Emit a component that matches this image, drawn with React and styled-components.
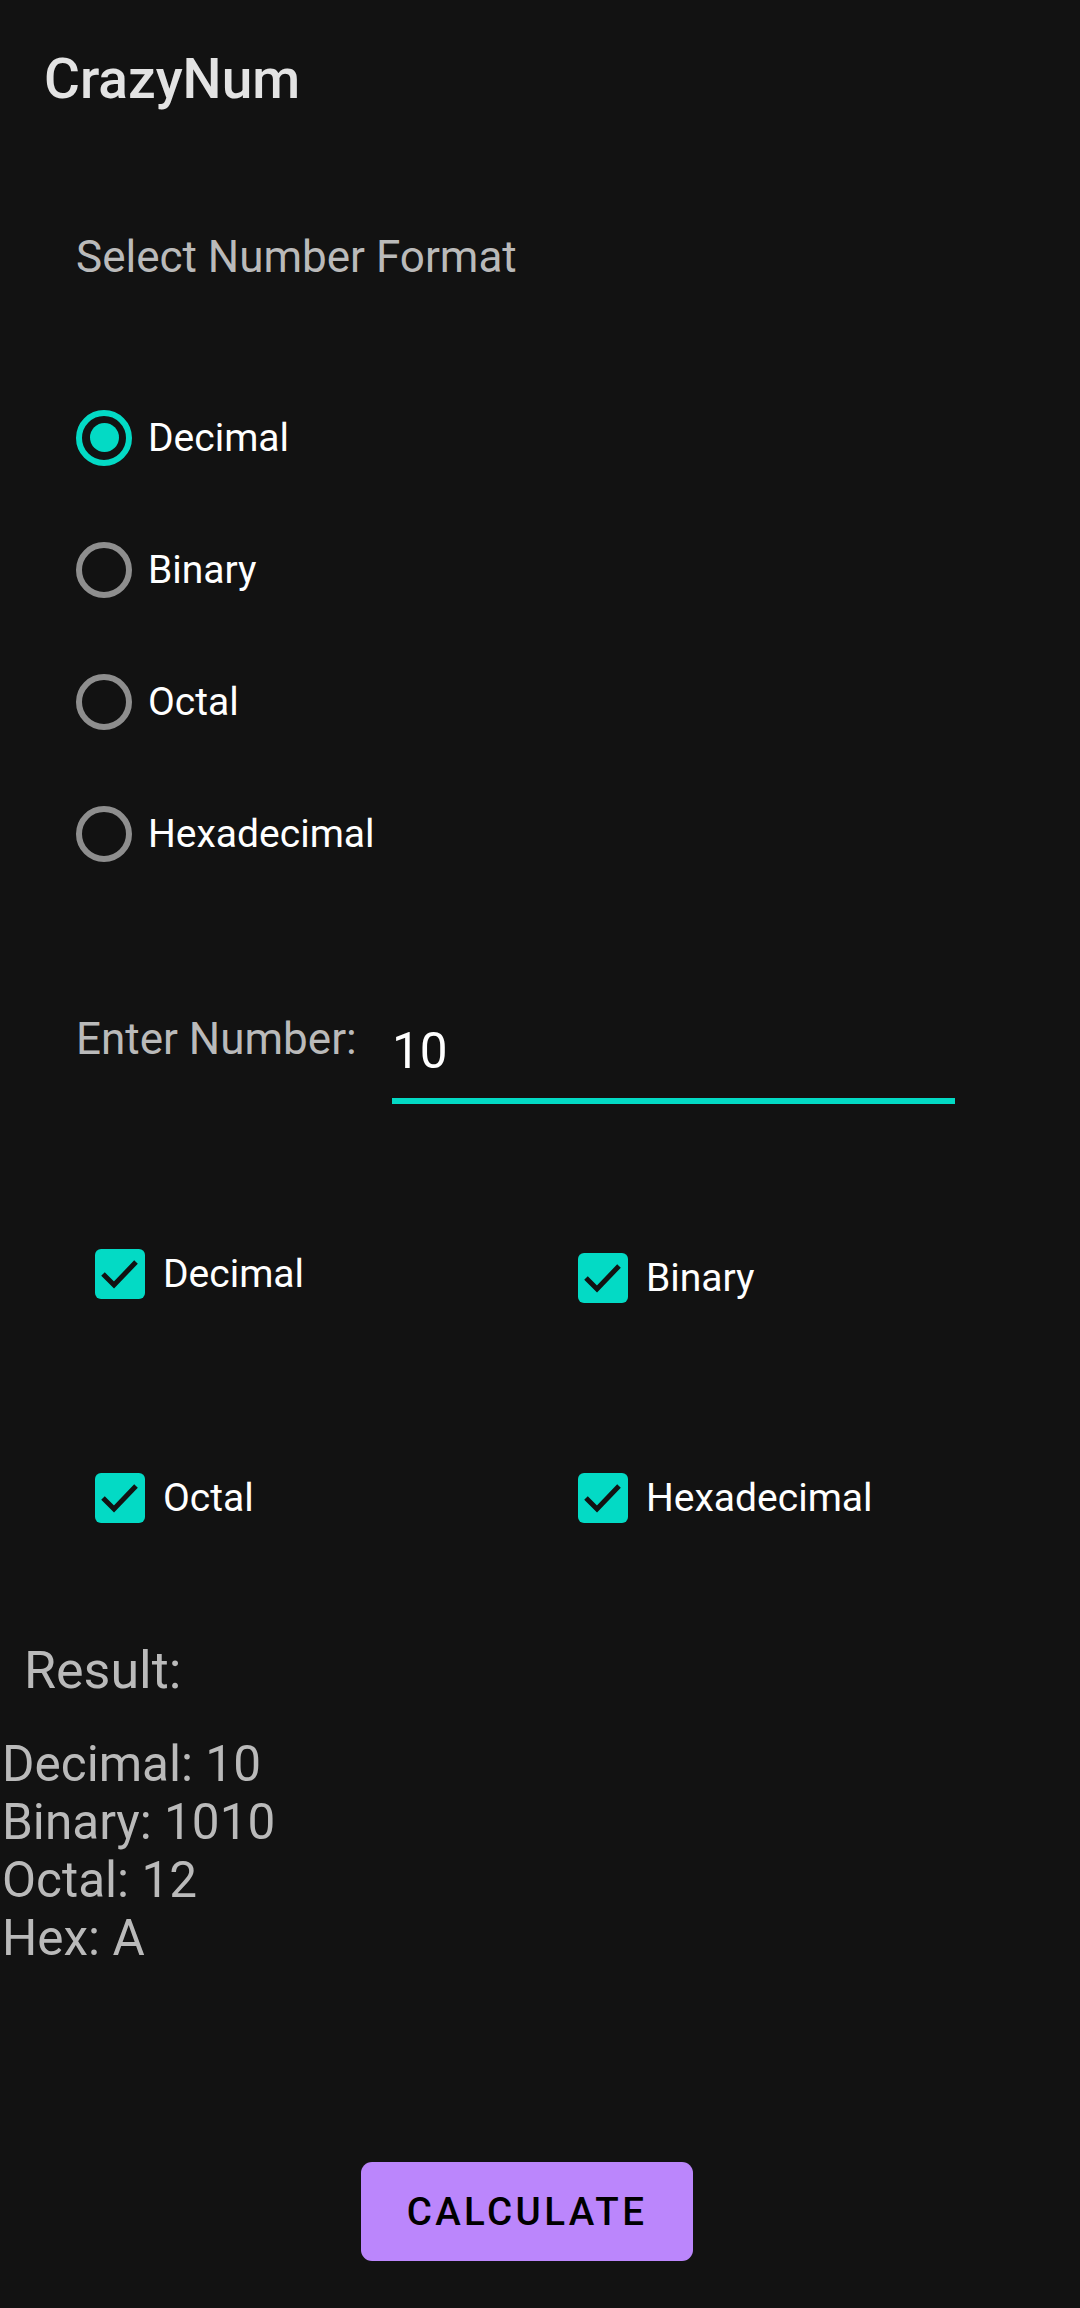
import React, { useState } from "react";
import styled, { createGlobalStyle } from "styled-components";

const GlobalStyle = createGlobalStyle`
  html, body {
    margin: 0;
    padding: 0;
    background: #121212;
  }
  body {
    font-family: Roboto, "Noto Sans", "Liberation Sans", sans-serif;
    -webkit-font-smoothing: antialiased;
  }
  * { box-sizing: border-box; }
`;

const TEAL = "#03dac5";

const Screen = styled.div`
  width: 1080px;
  min-height: 2308px;
  background: #121212;
  display: flex;
  flex-direction: column;
`;

const AppBar = styled.header`
  padding: 47px 0 0 44px;
  height: 232px;
`;

const Title = styled.h1`
  margin: 0;
  font-size: 55px;
  line-height: 64.5px;
  font-weight: 500;
  color: #e3e3e3;
`;

const SectionLabel = styled.div`
  padding-left: 76px;
  font-size: 44px;
  line-height: 51.6px;
  color: #bababa;
`;

const RadioGroup = styled.div`
  display: flex;
  flex-direction: column;
  margin-top: 88px;
  padding-left: 76px;
`;

const RadioRow = styled.label`
  display: flex;
  align-items: center;
  height: 132px;
  gap: 16px;
  cursor: pointer;
`;

const RadioCircle = styled.span`
  width: 56px;
  height: 56px;
  border-radius: 50%;
  border: 6px solid ${(p) => (p.$checked ? TEAL : "#8e8e8e")};
  display: flex;
  align-items: center;
  justify-content: center;
  flex: 0 0 auto;
  &::after {
    content: "";
    width: 29px;
    height: 29px;
    border-radius: 50%;
    background: ${TEAL};
    display: ${(p) => (p.$checked ? "block" : "none")};
  }
`;

const OptionText = styled.span`
  font-size: 39px;
  color: #ffffff;
  line-height: 46px;
`;

const EntryRow = styled.div`
  display: grid;
  grid-template-columns: 316px 563px;
  align-items: start;
  padding-left: 76px;
  margin-top: 114px;
`;

const EntryLabel = styled.div`
  font-size: 44px;
  line-height: 51.6px;
  color: #bababa;
`;

const InputWrap = styled.div`
  margin-top: 8px;
  border-bottom: 6px solid ${TEAL};
  padding-bottom: 18px;
`;

const NumberInput = styled.input`
  display: block;
  width: 100%;
  border: none;
  outline: none;
  background: transparent;
  padding: 0;
  margin: 0;
  font-family: Roboto, "Noto Sans", sans-serif;
  font-size: 49.5px;
  line-height: 58px;
  height: 58px;
  color: #ffffff;
`;

const CheckGrid = styled.div`
  display: grid;
  grid-template-columns: 483px 1fr;
  row-gap: 170px;
  padding-left: 95px;
  margin-top: 145px;
`;

const CheckCell = styled.label`
  display: flex;
  align-items: center;
  height: 50px;
  gap: 18px;
  margin-top: ${(p) => p.$offset || 0}px;
  cursor: pointer;
`;

const CheckBox = styled.span`
  width: 50px;
  height: 50px;
  border-radius: 6px;
  background: ${TEAL};
  flex: 0 0 auto;
  display: flex;
  svg { display: block; }
`;

const ResultTitle = styled.div`
  margin-top: 117px;
  padding-left: 24px;
  font-size: 52px;
  line-height: 61px;
  color: #bababa;
`;

const ResultLines = styled.div`
  margin-top: 34px;
  padding-left: 2px;
  font-size: 49.5px;
  line-height: 58px;
  color: #bababa;
  white-space: pre-line;
`;

const ButtonArea = styled.div`
  padding-left: 361px;
  margin-top: 195px;
`;

const CalcButton = styled.button`
  width: 332px;
  height: 99px;
  border: none;
  border-radius: 11px;
  background: #bb86fc;
  color: #000000;
  font-family: Roboto, "Noto Sans", sans-serif;
  font-size: 38.5px;
  font-weight: 500;
  letter-spacing: 3.4px;
  text-transform: uppercase;
  padding: 0;
  cursor: pointer;
`;

const formats = ["Decimal", "Binary", "Octal", "Hexadecimal"];

function Check() {
  return (
    <svg width="50" height="50" viewBox="0 0 50 50">
      <polyline
        points="8,25 19,36 41,13"
        fill="none"
        stroke="#121212"
        strokeWidth="5"
        strokeLinecap="butt"
        strokeLinejoin="miter"
      />
    </svg>
  );
}

export default function App() {
  const [format, setFormat] = useState("Decimal");
  const [value, setValue] = useState("10");
  const checks = [
    { label: "Decimal", offset: 0 },
    { label: "Binary", offset: 4 },
    { label: "Octal", offset: 0 },
    { label: "Hexadecimal", offset: 0 },
  ];

  return (
    <Screen>
      <GlobalStyle />
      <AppBar>
        <Title>CrazyNum</Title>
      </AppBar>
      <SectionLabel>Select Number Format</SectionLabel>
      <RadioGroup>
        {formats.map((f) => (
          <RadioRow key={f} onClick={() => setFormat(f)}>
            <RadioCircle $checked={format === f} />
            <OptionText>{f}</OptionText>
          </RadioRow>
        ))}
      </RadioGroup>
      <EntryRow>
        <EntryLabel>Enter Number:</EntryLabel>
        <InputWrap>
          <NumberInput value={value} onChange={(e) => setValue(e.target.value)} />
        </InputWrap>
      </EntryRow>
      <CheckGrid>
        {checks.map((c) => (
          <CheckCell key={c.label} $offset={c.offset}>
            <CheckBox>
              <Check />
            </CheckBox>
            <OptionText>{c.label}</OptionText>
          </CheckCell>
        ))}
      </CheckGrid>
      <ResultTitle>Result:</ResultTitle>
      <ResultLines>
        {"Decimal: 10\nBinary: 1010\nOctal: 12\nHex: A"}
      </ResultLines>
      <ButtonArea>
        <CalcButton>Calculate</CalcButton>
      </ButtonArea>
    </Screen>
  );
}
